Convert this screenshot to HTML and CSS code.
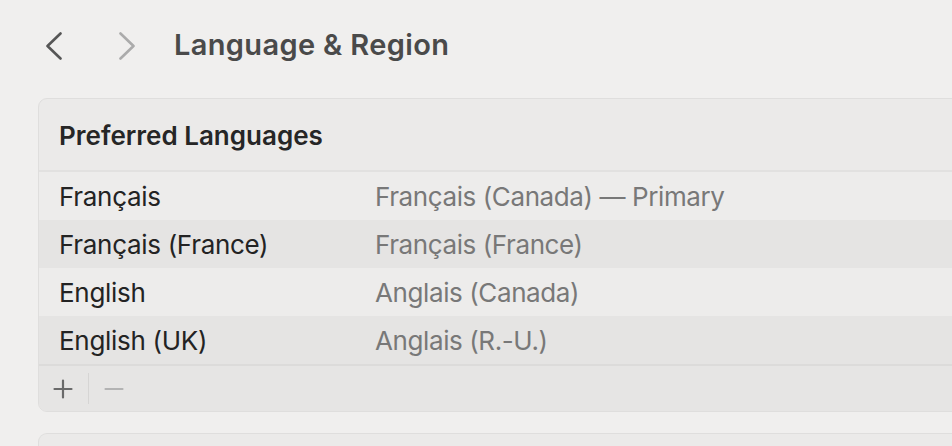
FILE: index.html
```html
<!DOCTYPE html>
<html>
<head>
<meta charset="utf-8">
<link rel="stylesheet" href="styles.css">
</head>
<body>
<div class="page">
  <header class="toolbar">
    <button class="nav back" aria-label="Back">
      <svg width="18" height="28" viewBox="0 0 18 28"><path d="M15.5 1.5 L2.5 14 L15.5 26.5" fill="none" stroke="#565656" stroke-width="2.6" stroke-linecap="round" stroke-linejoin="round"/></svg>
    </button>
    <button class="nav fwd" aria-label="Forward">
      <svg width="18" height="28" viewBox="0 0 18 28"><path d="M2.5 1.5 L15.5 14 L2.5 26.5" fill="none" stroke="#ababab" stroke-width="2.6" stroke-linecap="round" stroke-linejoin="round"/></svg>
    </button>
    <h1 class="title">Language &amp; Region</h1>
  </header>

  <section class="card">
    <div class="card-head">Preferred Languages</div>
    <div class="rows">
      <div class="row"><span class="name">Français</span><span class="desc">Français (Canada) — Primary</span></div>
      <div class="row alt"><span class="name">Français (France)</span><span class="desc">Français (France)</span></div>
      <div class="row"><span class="name">English</span><span class="desc">Anglais (Canada)</span></div>
      <div class="row alt"><span class="name">English (UK)</span><span class="desc">Anglais (R.-U.)</span></div>
    </div>
    <div class="card-foot">
      <button class="tool plus" aria-label="Add">
        <svg width="20" height="20" viewBox="0 0 20 20"><path d="M10 1.5 V18.5 M1.5 10 H18.5" stroke="#6a6a6a" stroke-width="2.2" stroke-linecap="round"/></svg>
      </button>
      <span class="sep"></span>
      <button class="tool minus" aria-label="Remove">
        <svg width="20" height="20" viewBox="0 0 20 20"><path d="M1.5 10 H18.5" stroke="#b3b3b3" stroke-width="2.2" stroke-linecap="round"/></svg>
      </button>
    </div>
  </section>

  <section class="card next"></section>
</div>
</body>
</html>
```

FILE: styles.css
```css
html, body {
  margin: 0;
  padding: 0;
  background: #f0efee;
  overflow: hidden;
}
body {
  width: 952px;
  height: 446px;
  font-family: Inter, "Noto Sans", "Liberation Sans", sans-serif;
  color: #242424;
}
.page {
  padding: 20px 0 0 38px;
}
.toolbar {
  display: flex;
  align-items: center;
  height: 52px;
  margin-left: 6px;
}
.nav {
  border: 0;
  background: none;
  padding: 0;
  width: 20px;
  height: 30px;
  display: flex;
  align-items: center;
  justify-content: center;
}
.nav.back { margin-right: 53px; }
.nav.fwd { margin-right: 37px; }
.title {
  margin: 0;
  font-size: 29px;
  line-height: 34px;
  font-weight: 600;
  color: #4a4a4a;
  letter-spacing: 0.35px;
  position: relative;
  top: -1px;
}
.card {
  margin-top: 26px;
  margin-right: -30px;
  border: 1px solid #dfdedd;
  border-radius: 9px;
  background: #ebeae9;
  overflow: hidden;
}
.card-head {
  height: 73px;
  box-sizing: border-box;
  padding-top: 2px;
  display: flex;
  align-items: center;
  padding-left: 20px;
  font-size: 26px;
  line-height: 32px;
  font-weight: 600;
  color: #262626;
  border-bottom: 2px solid #e2e1e0;
}
.row {
  height: 48px;
  box-sizing: border-box;
  padding-top: 2px;
  display: flex;
  align-items: center;
  padding-left: 20px;
  font-size: 26px;
  line-height: 32px;
  letter-spacing: -0.3px;
  background: #edeceb;
}
.row.alt { background: #e5e4e3; }
.name {
  width: 316px;
  color: #232323;
}
.desc {
  color: #787878;
  letter-spacing: -0.4px;
}
.card-foot {
  height: 45px;
  border-top: 2px solid #dcdbda;
  background: #e6e5e4;
  display: flex;
  align-items: center;
  padding-left: 13px;
}
.tool {
  border: 0;
  background: none;
  padding: 0;
  width: 22px;
  height: 22px;
  display: flex;
  align-items: center;
  justify-content: center;
}
.sep {
  width: 1px;
  height: 31px;
  background: #d6d5d4;
  margin: 0 14px 0 14px;
}
.card.next {
  margin-top: 21px;
  height: 12px;
  border-bottom: 0;
  border-radius: 9px 9px 0 0;
  background: #ebeae9;
}
```
